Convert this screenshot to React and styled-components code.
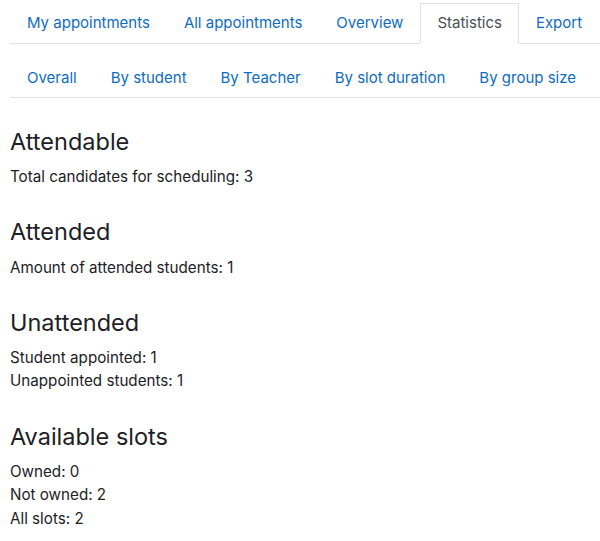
import React from "react";
import styled, { createGlobalStyle } from "styled-components";

const GlobalStyle = createGlobalStyle`
  html, body {
    margin: 0;
    padding: 0;
    background: #fff;
  }
  body {
    font-family: Inter, "Noto Sans", "Liberation Sans", sans-serif;
    font-size: 15px;
    line-height: 1.5;
    color: #1d2125;
  }
`;

const Page = styled.div`
  padding: 3px 0 0 10px;
`;

const TabList = styled.ul`
  display: flex;
  list-style: none;
  margin: 0 0 ${(p) => p.$gap || 0}px;
  padding: 0;
  border-bottom: 1px solid #dee2e6;
`;

const TabItem = styled.li`
  margin-bottom: -1px;
`;

const TabLink = styled.a`
  display: block;
  padding: 8px 16px;
  border: 1px solid transparent;
  border-color: ${(p) => (p.$active ? "#dee2e6 #dee2e6 #fff" : "transparent")};
  background: ${(p) => (p.$active ? "#fff" : "transparent")};
  color: ${(p) => (p.$active ? "#495057" : "#0f6cbf")};
  text-decoration: none;
  white-space: nowrap;
  cursor: pointer;
`;

const Section = styled.section`
  margin-top: 30px;
`;

const Heading = styled.h3`
  margin: 0 0 9px;
  font-size: 23.5px;
  font-weight: 400;
  line-height: 1.2;
  color: #1d2125;
`;

const Text = styled.p`
  margin: 0;
  font-size: 15.2px;
  line-height: 23.3px;
`;

const mainTabs = ["My appointments", "All appointments", "Overview", "Statistics", "Export"];
const subTabs = ["Overall", "By student", "By Teacher", "By slot duration", "By group size"];

const sections = [
  { title: "Attendable", lines: ["Total candidates for scheduling: 3"] },
  { title: "Attended", lines: ["Amount of attended students: 1"] },
  { title: "Unattended", lines: ["Student appointed: 1", "Unappointed students: 1"] },
  { title: "Available slots", lines: ["Owned: 0", "Not owned: 2", "All slots: 2"] },
];

const Tabs = ({ items, active, gap }) => (
  <TabList $gap={gap}>
    {items.map((t) => (
      <TabItem key={t}>
        <TabLink $active={t === active}>{t}</TabLink>
      </TabItem>
    ))}
  </TabList>
);

const App = () => {
  return (
    <Page>
      <GlobalStyle />
      <Tabs items={mainTabs} active="Statistics" gap={14} />
      <Tabs items={subTabs} />
      {sections.map((s) => (
        <Section key={s.title}>
          <Heading>{s.title}</Heading>
          <Text>
            {s.lines.map((l, i) => (
              <React.Fragment key={l}>
                {i > 0 && <br />}
                {l}
              </React.Fragment>
            ))}
          </Text>
        </Section>
      ))}
    </Page>
  );
};

export default App;
